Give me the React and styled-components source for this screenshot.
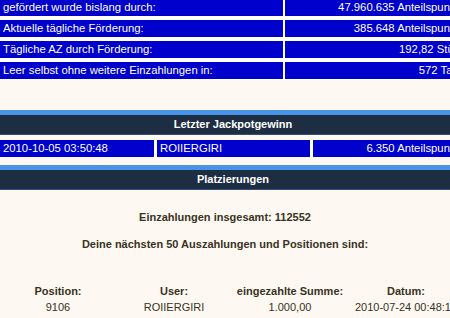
import React from "react";
import styled, { createGlobalStyle } from "styled-components";

const GlobalStyle = createGlobalStyle`
  html, body {
    margin: 0;
    padding: 0;
    overflow: hidden;
    background: #fdf9f2;
  }
  body {
    width: 450px;
    font-family: "Liberation Sans", Arial, sans-serif;
    font-size: 11px;
  }
`;

const stats = [
  ["gefördert wurde bislang durch:", "47.960.635 Anteilspunkte"],
  ["Aktuelle tägliche Förderung:", "385.648 Anteilspunkte"],
  ["Tägliche AZ durch Förderung:", "192,82 Stück"],
  ["Leer selbst ohne weitere Einzahlungen in:", "572 Tage"],
];

const places = [["9106", "ROIIERGIRI", "1.000,00", "2010-07-24 00:48:12"]];

const App = () => {
  return (
    <Page>
      <GlobalStyle />
      <StatsTable>
        {stats.map(([label, value]) => (
          <React.Fragment key={label}>
            <Cell>{label}</Cell>
            <Cell align="right">{value}</Cell>
          </React.Fragment>
        ))}
      </StatsTable>

      <SectionHead>Letzter Jackpotgewinn</SectionHead>
      <JackpotRow>
        <Cell>2010-10-05 03:50:48</Cell>
        <Cell>ROIIERGIRI</Cell>
        <Cell align="right">6.350 Anteilspunkte</Cell>
      </JackpotRow>

      <SectionHead>Platzierungen</SectionHead>
      <Summary>
        <Line>Einzahlungen insgesamt: 112552</Line>
        <Line>Deine nächsten 50 Auszahlungen und Positionen sind:</Line>
      </Summary>

      <PlaceTable>
        <HeadCell>Position:</HeadCell>
        <HeadCell>User:</HeadCell>
        <HeadCell>eingezahlte Summe:</HeadCell>
        <HeadCell>Datum:</HeadCell>
        {places.map((row) =>
          row.map((v, i) => <DataCell key={row[0] + i}>{v}</DataCell>)
        )}
      </PlaceTable>
    </Page>
  );
};

const Page = styled.div`
  width: 450px;
  margin-top: -1px;
`;

const StatsTable = styled.div`
  width: 468px;
  display: grid;
  grid-template-columns: 283px 1fr;
  column-gap: 2px;
  row-gap: 4px;
  background: #ffffff;
  padding-bottom: 1px;
`;

const Cell = styled.div`
  background: #0000cc;
  color: #ffffff;
  height: 17px;
  line-height: 17px;
  padding: 0 3px;
  font-size: 11.3px;
  white-space: nowrap;
  overflow: hidden;
  text-align: ${(p) => p.align || "left"};
`;

const SectionHead = styled.div`
  width: 466px;
  margin-top: 30px;
  border-top: 5px solid #4893e8;
  background: #1d2e42;
  border-bottom: 1px solid #33507a;
  height: 19px;
  line-height: 19px;
  color: #ffffff;
  font-weight: bold;
  text-align: center;
`;

const JackpotRow = styled.div`
  width: 468px;
  margin-top: 5px;
  margin-bottom: 8px;
  display: grid;
  grid-template-columns: 154px 153px 1fr;
  column-gap: 3px;
  background: #ffffff;

  & + ${SectionHead} {
    margin-top: 0;
  }
`;

const Summary = styled.div`
  display: flex;
  flex-direction: column;
  align-items: center;
  gap: 13px;
  padding-top: 20px;
  color: #3a3223;
  font-weight: bold;
`;

const Line = styled.div`
  line-height: 14px;
`;

const PlaceTable = styled.div`
  display: grid;
  grid-template-columns: repeat(4, 116px);
  row-gap: 2px;
  margin-top: 33px;
  color: #3a3223;
  white-space: nowrap;
`;

const HeadCell = styled.div`
  text-align: center;
  font-weight: bold;
  line-height: 14px;
`;

const DataCell = styled.div`
  text-align: center;
  line-height: 14px;
`;

export default App;
